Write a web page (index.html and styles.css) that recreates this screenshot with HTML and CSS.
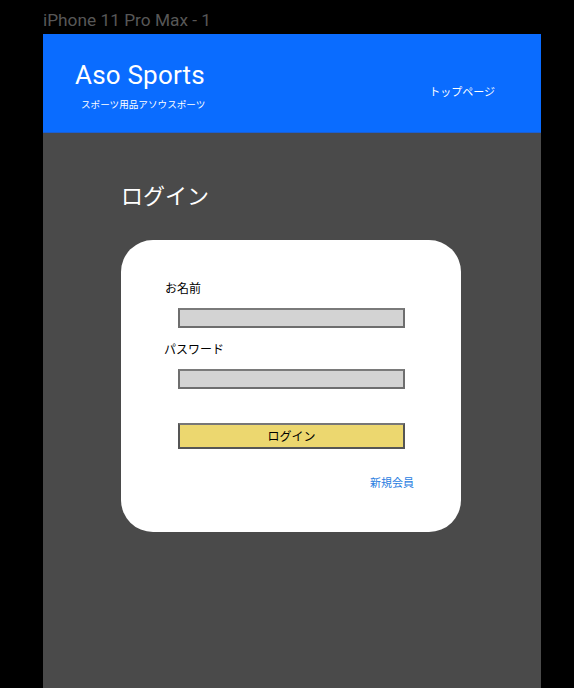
FILE: index.html
```html
<!DOCTYPE html>
<html lang="ja">
<head>
<meta charset="utf-8">
<title>Aso Sports</title>
<link rel="stylesheet" href="styles.css">
</head>
<body>
<div class="frame-label">iPhone 11 Pro Max - 1</div>
<div class="artboard">
  <header class="header">
    <div class="brand">
      <div class="brand-name">Aso Sports</div>
      <div class="brand-sub">スポーツ用品アソウスポーツ</div>
    </div>
    <a class="nav-link">トップページ</a>
  </header>
  <main class="main">
    <h1 class="page-title">ログイン</h1>
    <div class="card">
      <div class="label label-name">お名前</div>
      <div class="input"></div>
      <div class="label label-pass">パスワード</div>
      <div class="input"></div>
      <div class="button">ログイン</div>
      <div class="signup-row"><a class="signup">新規会員</a></div>
    </div>
  </main>
</div>
</body>
</html>
```
FILE: styles.css
```css
html, body {
  margin: 0;
  padding: 0;
  background: #000;
  height: 688px;
  overflow: hidden;
}
body {
  font-family: "Noto Sans CJK JP", "Noto Sans", sans-serif;
}
.frame-label {
  height: 34px;
  padding-left: 43px;
  box-sizing: border-box;
  padding-top: 10px;
  font-family: Roboto, "Noto Sans", sans-serif;
  font-size: 17.3px;
  line-height: 20px;
  color: #575757;
}
.artboard {
  margin-left: 43px;
  width: 498px;
  height: 654px;
  background: #4a4a4a;
}
.header {
  height: 99px;
  background: #0a6cff;
  border-bottom: 1px solid #1d5fd0;
  box-sizing: border-box;
  display: flex;
  justify-content: space-between;
  align-items: flex-start;
  color: #fff;
}
.brand {
  padding-left: 32px;
  padding-top: 24px;
}
.brand-name {
  font-family: Roboto, "Noto Sans", sans-serif;
  font-size: 26px;
  letter-spacing: 0.2px;
  line-height: 34px;
}
.brand-sub {
  font-size: 9.6px;
  line-height: 14px;
  margin-top: 5px;
  padding-left: 6px;
}
.nav-link {
  font-size: 11px;
  line-height: 14px;
  margin-top: 50px;
  margin-right: 46px;
  color: #fff;
}
.main {
  padding-left: 78px;
  padding-top: 47px;
}
.page-title {
  margin: 0;
  font-weight: normal;
  font-size: 22px;
  line-height: 28px;
  color: #fff;
}
.card {
  margin-top: 32px;
  width: 340px;
  height: 292px;
  background: #fff;
  border-radius: 32px;
  box-sizing: border-box;
  padding-top: 40px;
  display: flex;
  flex-direction: column;
}
.label {
  font-size: 12px;
  line-height: 16px;
  color: #000;
}
.label-name {
  margin-left: 44px;
}
.label-pass {
  margin-left: 43px;
  margin-top: 13px;
}
.input {
  margin-left: 57px;
  margin-top: 12px;
  width: 227px;
  height: 20px;
  box-sizing: border-box;
  background: #d3d3d3;
  border: 2px solid #6e6e6e;
  border-top-color: #7a7a7a;
}
.button {
  margin-left: 57px;
  margin-top: 34px;
  width: 227px;
  height: 26px;
  box-sizing: border-box;
  background: #ecd76f;
  border: 2px solid #555;
  border-top-color: #777;
  text-align: center;
  font-size: 12px;
  line-height: 22px;
  color: #000;
}
.signup-row {
  display: flex;
  justify-content: flex-end;
  padding-right: 47px;
  margin-top: 26px;
}
.signup {
  font-size: 11px;
  line-height: 14px;
  color: #2a7de1;
}
```
